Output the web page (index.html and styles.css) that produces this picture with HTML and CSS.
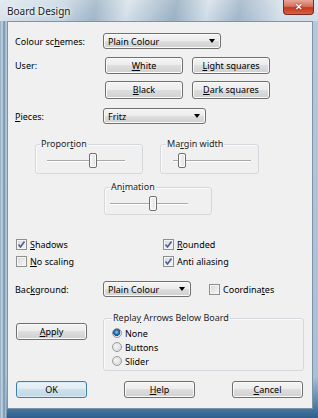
FILE: index.html
```html
<!DOCTYPE html>
<html lang="en">
<head>
    <meta charset="UTF-8">
    <title>Board Design</title>
    <link rel="stylesheet" href="styles.css">
</head>
<body>
<div class="window">
    <div class="titlebar">
        <span class="title">Board Design</span>
        <span class="close">&#x2715;</span>
    </div>

    <div class="client">
        <!-- Colour schemes -->
        <div class="row row-scheme">
            <span class="label">Colour sc<u>h</u>emes:</span>
            <div class="combo combo-scheme"><span>Plain Colour</span><span class="arrow"></span></div>
        </div>

        <div class="row row-user">
            <span class="label">User:</span>
            <button class="btn btn-colour"><u>W</u>hite</button>
            <button class="btn btn-colour"><u>L</u>ight squares</button>
        </div>
        <div class="row row-user2">
            <span class="label"></span>
            <button class="btn btn-colour"><u>B</u>lack</button>
            <button class="btn btn-colour"><u>D</u>ark squares</button>
        </div>

        <div class="row row-pieces">
            <span class="label"><u>P</u>ieces:</span>
            <div class="combo combo-pieces"><span>Fritz</span><span class="arrow"></span></div>
        </div>

        <!-- Sliders -->
        <div class="groups">
            <fieldset class="group group-proportion">
                <legend>Propor<u>t</u>ion</legend>
                <div class="slider slider-wide"><span class="thumb" style="margin-left:42px"></span></div>
            </fieldset>
            <fieldset class="group group-margin">
                <legend>Ma<u>r</u>gin width</legend>
                <div class="slider slider-wide"><span class="thumb" style="margin-left:5px"></span></div>
            </fieldset>
        </div>
        <fieldset class="group group-animation">
            <legend>An<u>i</u>mation</legend>
            <div class="slider"><span class="thumb" style="margin-left:39px"></span></div>
        </fieldset>

        <!-- Options -->
        <div class="checks">
            <label class="check"><span class="box on"></span><span><u>S</u>hadows</span></label>
            <label class="check"><span class="box on"></span><span><u>R</u>ounded</span></label>
            <label class="check"><span class="box"></span><span><u>N</u>o scaling</span></label>
            <label class="check"><span class="box on"></span><span>Anti aliasing</span></label>
        </div>

        <div class="row row-background">
            <span class="label">Bac<u>k</u>ground:</span>
            <div class="combo combo-bg"><span>Plain Colour</span><span class="arrow"></span></div>
            <label class="check check-coords"><span class="box"></span><span>Coordina<u>t</u>es</span></label>
        </div>

        <div class="bottom">
            <button class="btn btn-apply"><u>A</u>pply</button>
            <fieldset class="group group-replay">
                <legend>Repla<u>y</u> Arrows Below Board</legend>
                <label class="radio"><span class="dot on"></span><span>None</span></label>
                <label class="radio"><span class="dot"></span><span>Buttons</span></label>
                <label class="radio"><span class="dot"></span><span>Slider</span></label>
            </fieldset>
        </div>

        <div class="actions">
            <button class="btn btn-default">OK</button>
            <button class="btn"><u>H</u>elp</button>
            <button class="btn"><u>C</u>ancel</button>
        </div>
    </div>
</div>
</body>
</html>
```

FILE: styles.css
```css
/* Fenêtre style Vista */
body {
    margin: 0;
    font-family: "Noto Sans", "Open Sans", sans-serif;
    font-size: 9px;
    color: #000;
    background: #fff;
}

u {
    text-decoration: underline;
    text-underline-offset: 1px;
}

.window {
    width: 318px;
    height: 418px;
    box-sizing: border-box;
    padding: 0 5px 9px 7px;
    background:
        linear-gradient(90deg, #8aa6bf 0px, #c9d9e6 2px, #6f8ea9 4px, #b7cbdc 6px, transparent 7px),
        linear-gradient(180deg, #c4d5e2 0%, #b3c8d9 6%, #aac1d3 90%, #5b88b0 96%, #2e5f8c 100%);
    display: flex;
    flex-direction: column;
}

.titlebar {
    height: 21px;
    margin: 0 -5px 0 -7px;
    padding: 0 5px 0 7px;
    display: flex;
    justify-content: space-between;
    align-items: flex-start;
    background:
        linear-gradient(100deg, rgba(255,255,255,0.45) 0%, rgba(255,255,255,0.1) 20%, rgba(60,90,120,0.2) 30%, rgba(255,255,255,0.35) 40%, rgba(60,90,120,0.25) 55%, rgba(255,255,255,0.3) 65%, rgba(60,90,120,0.2) 75%, rgba(255,255,255,0.35) 88%),
        linear-gradient(180deg, #cddbe6, #b8ccdc);
}

.title {
    font-size: 10px;
    line-height: 22px;
    color: #1a1a1a;
    text-shadow: 0 0 6px #fff, 0 0 3px #fff;
}

.close {
    width: 31px;
    height: 15px;
    margin-right: -1px;
    box-sizing: border-box;
    border: 1px solid #7b2b22;
    border-top: none;
    border-radius: 0 0 4px 4px;
    background: linear-gradient(180deg, #e7a799 0%, #d6725c 45%, #c13a22 55%, #d9603f 100%);
    color: #fff;
    font-size: 9px;
    font-weight: bold;
    text-align: center;
    line-height: 14px;
    text-shadow: 0 0 2px #5a1010;
}

.client {
    flex: 1;
    background: #f0f0f0;
    border: 1px solid #7d93a8;
    display: flex;
    flex-direction: column;
    padding: 0 0 0 7px;
}

.row {
    display: flex;
    align-items: center;
}

.label {
    width: 89px;
    flex: none;
}

.row-scheme { margin-top: 11px; height: 16px; }
.row-user { margin-top: 8px; height: 17px; }
.row-user2 { margin-top: 7px; height: 18px; }
.row-pieces { margin-top: 9px; height: 16px; }
.row-background { margin-top: 14px; height: 16px; }

/* Boutons */
.btn {
    font: inherit;
    color: #000;
    height: 17px;
    padding: 0;
    border: 1px solid #707070;
    border-radius: 3px;
    background: linear-gradient(180deg, #f4f4f4 0%, #ececec 49%, #dedede 50%, #d0d0d0 100%);
    box-shadow: inset 0 0 0 1px #fafafa;
    line-height: 14px;
}

.btn-colour {
    width: 78px;
    height: 100%;
    margin-left: 1px;
    margin-right: 8px;
}

.btn-apply {
    width: 71px;
    margin: 11px 0 0 1px;
}

.btn-default {
    border-color: #3c7fb1;
    background: linear-gradient(180deg, #eaf3f8 0%, #dfecf4 49%, #cfe0ec 50%, #c3d7e5 100%);
    box-shadow: inset 0 0 0 1px #d8ecf8;
}

/* Listes déroulantes */
.combo {
    height: 100%;
    box-sizing: border-box;
    border: 1px solid #707070;
    border-radius: 3px;
    background: linear-gradient(180deg, #f4f4f4 0%, #ececec 49%, #dedede 50%, #d0d0d0 100%);
    box-shadow: inset 0 0 0 1px #fafafa;
    display: flex;
    align-items: center;
    justify-content: space-between;
    padding: 0 5px 0 4px;
    margin-left: -1px;
}

.combo-scheme { width: 118px; }
.combo-pieces { width: 103px; }
.combo-bg { width: 88px; }

.arrow {
    width: 0;
    height: 0;
    border-left: 3px solid transparent;
    border-right: 3px solid transparent;
    border-top: 4px solid #000;
}

/* Groupes */
.groups {
    display: flex;
    gap: 17px;
    margin: 14px 0 0 20px;
}

.group {
    margin: 0;
    padding: 0 0 5px 11px;
    border: 1px solid #d5d9dd;
    border-radius: 3px;
    box-shadow: inset 1px 1px 0 #fbfbfb;
    min-inline-size: 0;
    box-sizing: border-box;
}

.group legend {
    margin-left: -7px;
    padding: 0 1px;
    line-height: 12px;
    color: #1e1e1e;
}

.group-proportion { width: 108px; }
.group-margin { width: 99px; padding-left: 12px; }
.group-margin legend { margin-left: -7px; }

.group-animation {
    width: 108px;
    margin: 7px 0 0 89px;
    padding: 0 0 3px 5px;
}

.group-animation legend { margin-left: 0; }

.slider {
    width: 78px;
    height: 15px;
    margin-top: 3px;
    display: flex;
    background: linear-gradient(180deg, transparent 7px, #a9a9a9 7px, #a9a9a9 8px, #ffffff 8px, #ffffff 9px, transparent 9px);
}

.thumb {
    width: 8px;
    height: 15px;
    box-sizing: border-box;
    border: 1px solid #6f6f6f;
    border-radius: 2px;
    background: linear-gradient(90deg, #f6f6f6, #e2e2e2);
    box-shadow: inset 0 0 0 1px #fff;
}

/* Cases à cocher */
.checks {
    display: grid;
    grid-template-columns: 147px auto;
    row-gap: 5px;
    margin: 23px 0 0 1px;
}

.check {
    display: flex;
    align-items: center;
    gap: 3px;
    height: 12px;
}

.box {
    width: 11px;
    height: 11px;
    box-sizing: border-box;
    border: 1px solid #8e8f8f;
    background: linear-gradient(135deg, #d8d8d8, #f7f7f7);
    box-shadow: inset 0 0 0 1px #f4f4f4;
    display: inline-block;
}

.box.on {
    background:
        url("data:image/svg+xml,%3Csvg xmlns='http://www.w3.org/2000/svg' width='9' height='9'%3E%3Cpath d='M1.5 4.5 L3.5 7 L7.5 1.5' fill='none' stroke='%234a5f97' stroke-width='1.6'/%3E%3C/svg%3E") center no-repeat,
        linear-gradient(135deg, #d8d8d8, #f7f7f7);
}

.check-coords {
    margin-left: 18px;
}

/* Bas de fenêtre */
.bottom {
    display: flex;
    align-items: flex-start;
    gap: 16px;
    margin-top: 15px;
}

.group-replay {
    width: 201px;
    padding: 2px 0 2px 8px;
}

.group-replay legend { margin-left: 0; }

.radio {
    display: flex;
    align-items: center;
    gap: 3px;
    height: 14px;
}

.dot {
    width: 10px;
    height: 10px;
    box-sizing: border-box;
    border-radius: 50%;
    border: 1px solid #9a9a9a;
    background: radial-gradient(circle at 40% 40%, #f6f6f6, #d2d2d2);
}

.dot.on {
    background: radial-gradient(circle at 45% 40%, #9fd2f5 0, #2d77b8 2px, #1d4f86 3.5px, #e8e8e8 4px);
}

.actions {
    display: flex;
    justify-content: space-between;
    margin: 10px 9px 0 1px;
}

.actions .btn {
    width: 71px;
}
```
